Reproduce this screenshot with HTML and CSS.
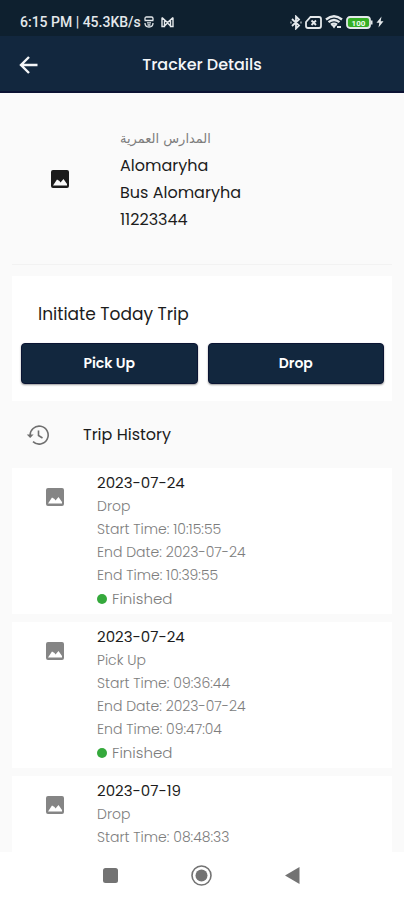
FILE: index.html
```html
<!DOCTYPE html>
<html lang="en">
<head>
<meta charset="utf-8">
<meta name="viewport" content="width=device-width, initial-scale=1">
<title>Tracker Details</title>
<link rel="stylesheet" href="styles.css">
</head>
<body>
<svg class="sprite" aria-hidden="true">
  <symbol id="image" viewBox="0 0 24 24"><path fill="currentColor" fill-rule="evenodd" d="M5 3h14a2 2 0 0 1 2 2v14a2 2 0 0 1-2 2H5a2 2 0 0 1-2-2V5a2 2 0 0 1 2-2zM5 18.500h14v-1.500l-3.500-5-3 3.500-1-1.500L9 12.500z"/></symbol>
</svg>
<div class="screen">
  <div class="status">
    <div class="status-group">
      <span>6:15 PM | 45.3KB/s</span>
      <svg class="mark" width="10" height="12" viewBox="0 0 10 12" fill="none" stroke="currentColor" stroke-width="1.300"><path d="M1 4V2.500Q1 1 2.500 1H7.500Q9 1 9 2.500V4M.5 4.500h9M3 6.800h4M1 7q0 4 4 4t4-4M3.500 9h3"/></svg>
      <svg class="mark" width="13" height="12" viewBox="0 0 13 12" fill="none" stroke="currentColor" stroke-width="1.400"><path d="M1 1.500v9h2.500v-6M12 1.500v9H9.500v-6M1 1.500l5.500 5 5.500-5M3.500 10l3-3 3 3"/></svg>
    </div>
    <div class="status-group status-right">
      <svg width="12" height="15" viewBox="0 0 12 15" fill="none" stroke="currentColor" stroke-width="1.800"><path d="M2 4l7 6.500L6 13.500v-12l3 3L2 11M.5 7.500h1M10.500 7.500h1"/></svg>
      <svg width="17" height="13" viewBox="0 0 17 13" fill="none" stroke="currentColor" stroke-width="1.800"><path d="M5.500 1H14q2 0 2 2v7q0 2-2 2H3q-2 0-2-2V6zM6.500 4.500l4.500 4.500M11 4.500L6.500 9"/></svg>
      <svg width="18" height="14" viewBox="0 0 18 14" fill="none" stroke="currentColor" stroke-width="2.300"><path d="M1 4.500q8-6.500 16 0M3.500 7.200q5.500-4.500 11 0M6 9.700q3-2.200 6 0"/><path fill="currentColor" stroke="none" d="M6.500 10h5L9 13.500zM12 11h4v2h-4z"/></svg>
      <svg class="battery" width="27" height="13" viewBox="0 0 27 13"><rect x="1" y="1" width="23" height="11" rx="3" fill="#35ae25" stroke="currentColor" stroke-width="1.800"/><path d="M25 4.500h1.500v4H25z" fill="currentColor"/><text x="12.500" y="9.500" text-anchor="middle">100</text></svg>
      <svg width="8" height="12" viewBox="0 0 8 12"><path fill="currentColor" d="M5.500.5L.5 6.700h2.800L2.500 11.500l5-6.200H4.700z"/></svg>
    </div>
  </div>
  <header class="appbar">
    <button class="back" type="button" aria-label="Back">
      <svg width="24" height="24" viewBox="0 0 24 24" fill="none" stroke="currentColor" stroke-width="2.400"><path d="M20.500 12H5M12 4l-8 8 8 8"/></svg>
    </button>
    <h1>Tracker Details</h1>
  </header>
  <main>
    <section class="profile">
      <svg class="icon"><use href="#image"/></svg>
      <div>
        <p class="school" lang="ar">المدارس العمرية</p>
        <p>Alomaryha</p>
        <p>Bus Alomaryha</p>
        <p>11223344</p>
      </div>
    </section>
    <section class="initiate">
      <h2>Initiate Today Trip</h2>
      <div class="actions">
        <button type="button">Pick Up</button>
        <button type="button">Drop</button>
      </div>
    </section>
    <div class="history-head">
      <svg width="24" height="24" viewBox="0 0 24 24" fill="none" stroke="currentColor" stroke-width="1.600"><path d="M4.200 13A9 9 0 1 1 7 18.700M12.500 7.500v5l4 2.500"/><path fill="currentColor" stroke="none" d="M.8 11.500h6.800L4.200 15z"/></svg>
      <h2>Trip History</h2>
    </div>
    <ul class="trips">
      <li class="trip">
        <svg class="icon"><use href="#image"/></svg>
        <div>
          <h3>2023-07-24</h3>
          <p>Drop</p>
          <p>Start Time: 10:15:55</p>
          <p>End Date: 2023-07-24</p>
          <p>End Time: 10:39:55</p>
          <p class="state">Finished</p>
        </div>
      </li>
      <li class="trip">
        <svg class="icon"><use href="#image"/></svg>
        <div>
          <h3>2023-07-24</h3>
          <p>Pick Up</p>
          <p>Start Time: 09:36:44</p>
          <p>End Date: 2023-07-24</p>
          <p>End Time: 09:47:04</p>
          <p class="state">Finished</p>
        </div>
      </li>
      <li class="trip">
        <svg class="icon"><use href="#image"/></svg>
        <div>
          <h3>2023-07-19</h3>
          <p>Drop</p>
          <p>Start Time: 08:48:33</p>
        </div>
      </li>
    </ul>
  </main>
  <nav class="sysnav" aria-label="System">
    <button type="button" aria-label="Recent apps"><svg width="24" height="24" viewBox="0 0 24 24"><rect x="4" y="4" width="15" height="15" rx="2.500" fill="currentColor"/></svg></button>
    <button type="button" aria-label="Home"><svg width="24" height="24" viewBox="0 0 24 24"><circle cx="11.500" cy="11.500" r="9.500" fill="none" stroke="currentColor" stroke-width="1.600"/><circle cx="11.500" cy="11.500" r="6" fill="currentColor"/></svg></button>
    <button type="button" aria-label="Back"><svg width="24" height="24" viewBox="0 0 24 24"><path d="M4 11.500L18.500 3v17z" fill="currentColor"/></svg></button>
  </nav>
</div>
</body>
</html>
```
FILE: styles.css
```css
* { box-sizing: border-box; }
body, h1, h2, h3, p, ul { margin: 0; padding: 0; }
body { font-family: Poppins, Inter, "Noto Sans", sans-serif; color: #1c1c1c; background: #fafafa; }
h1, h2, h3 { font-weight: 400; }
button { border: 0; padding: 0; font: inherit; color: inherit; background: none; cursor: pointer; }
svg { display: block; flex: none; }
.sprite { display: none; }
.icon { width: 24px; height: 24px; }

.screen { display: flex; flex-direction: column; height: 100vh; }

.status {
  display: flex; justify-content: space-between; align-items: center;
  height: 36px; padding: 8px 20px 0; flex: none;
  background: #0e202f; color: #e4e8eb;
  font: 500 14px/20px Roboto, sans-serif;
}
.status-group { display: flex; align-items: center; gap: 3px; }
.status-group .mark + .mark { margin-left: 4px; }
.status-right { gap: 3px; }
.battery text { font: 700 8px Roboto, sans-serif; fill: #f0fff0; }

.appbar {
  display: grid; grid-template-columns: 24px 1fr 24px; align-items: center;
  height: 57px; padding: 2px 17px 0; flex: none;
  background: #12273e; color: #f4f6f8; border-bottom: 2px solid #0b1233;
}
.appbar h1 { font-size: 16px; line-height: 24px; font-weight: 500; text-align: center; }

main { flex: 1; min-height: 0; overflow: hidden; padding: 0 12px; }

.profile {
  display: flex; align-items: center; gap: 48px;
  height: 172px; padding-left: 36px;
  border-bottom: 1px solid #f2f2f2;
}
.profile p { font-size: 16px; line-height: 27px; }
.profile .school { font-size: 13px; color: #7d7d7d; font-family: "DejaVu Sans", sans-serif; }

.initiate { margin-top: 11px; padding: 24px 8px 17px 9px; background: #fff; }
.initiate h2 { padding-left: 17px; font-size: 17px; line-height: 28px; }
.actions { display: grid; grid-template-columns: 1fr 1fr; gap: 10px; margin-top: 15px; }
.actions button {
  height: 41px; border-radius: 4px; background: #12273e; color: #fff;
  font-size: 14px; font-weight: 600;
  border: 1px solid #0a1433; box-shadow: 0 1px 2px #0006;
}

.history-head { display: flex; align-items: center; gap: 33px; height: 67px; padding-left: 14px; color: #6f6f6f; }
.history-head h2 { font-size: 16px; line-height: 24px; color: #1c1c1c; }

.trips { list-style: none; display: grid; gap: 8px; }
.trip { display: flex; gap: 30px; min-height: 146px; padding: 2px 31px 4px; background: #fff; }
.trip .icon { margin-top: 15px; color: #858585; }
.trip h3 { font-size: 15px; line-height: 25px; }
.trip p { font-size: 14px; line-height: 23px; color: #7d7d7d; font-weight: 300; }
.trip .state { display: flex; align-items: center; gap: 5px; font-size: 15px; }
.state::before { content: ""; width: 10px; height: 10px; border-radius: 50%; background: #35a93c; }

.sysnav {
  display: flex; justify-content: center; align-items: center; gap: 67px;
  height: 48px; flex: none; background: #fff; color: #737373;
}
```
